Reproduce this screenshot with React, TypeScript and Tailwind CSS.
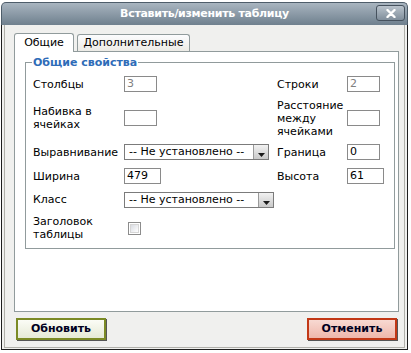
import React from 'react';

const font = { fontFamily: '"DejaVu Sans", Verdana, sans-serif' };

const TextBox = ({ value, w, muted }: { value: string; w: string; muted?: boolean }) => (
  <div className={`${w} h-[16px] border border-[#8a8a8a] bg-white pl-[2px] text-[11px] leading-[14px] ${muted ? 'text-[#808080]' : 'text-black'}`}>
    {value}
  </div>
);

const Select = ({ w }: { w: string }) => (
  <div className={`${w} h-[16px] border border-[#7b7b7b] bg-white flex items-stretch`}>
    <span className="flex-1 pl-[4px] text-[11px] leading-[14px] text-black whitespace-nowrap overflow-hidden">-- Не установлено --</span>
    <span className="w-[15px] border-l border-[#9a9a9a] bg-gradient-to-b from-[#f2f2f2] to-[#c9c9c9] flex items-end justify-center pb-[2px]">
      <svg width="7" height="4" viewBox="0 0 7 4"><path d="M0 0h7L3.5 4z" fill="#1a1a1a" /></svg>
    </span>
  </div>
);

const Label = ({ children, w }: { children: React.ReactNode; w: string }) => (
  <div className={`${w} shrink-0 text-[11px] leading-[13px] text-black`}>{children}</div>
);

export default function App() {
  return (
    <div className="w-[411px] h-[353px] bg-white overflow-hidden pt-[2px] pl-[1px]" style={font}>
      <div className="w-[407px] h-[348px] flex flex-col">
        {/* title bar */}
        <div className="h-[23px] shrink-0 rounded-t-[5px] border border-b-0 border-[#4e5d6a] bg-gradient-to-b from-[#a9b5c0] to-[#6f808e] flex items-center justify-center relative">
          <span className="text-white text-[11px] font-bold tracking-[-0.3px]">Вставить/изменить таблицу</span>
          <div className="absolute right-[2px] top-[2px] w-[29px] h-[16px] rounded-[3px] border border-[#46525e] bg-gradient-to-b from-[#b9c3cc] to-[#808e9b] flex items-center justify-center">
            <svg width="10" height="9" viewBox="0 0 10 9">
              <path d="M1.5 1L8.5 8M8.5 1L1.5 8" stroke="#fff" strokeWidth="2.4" strokeLinecap="round" />
            </svg>
          </div>
        </div>

        {/* body */}
        <div className="flex-1 flex flex-col border-l border-r border-b border-[#1e1e1e] bg-[#f0f0ee] px-[2px] pb-[1px]">
          <div className="flex-1 flex flex-col border-l border-r border-b border-[#b0b0aa] pl-[9px] pr-[5px] pt-[8px]">
            {/* tabs */}
            <div className="h-[18px] flex items-end gap-[3px]">
              <div className="relative z-10 -mb-px h-[19px] w-[60px] rounded-t-[3px] border border-b-0 border-[#919b9c] bg-white flex items-center justify-center text-[11px] text-black">
                Общие
              </div>
              <div className="h-[17px] w-[113px] rounded-t-[3px] border border-b-0 border-[#919b9c] bg-gradient-to-b from-[#fcfcfe] to-[#ecebe6] flex items-center justify-center text-[11px] text-black">
                Дополнительные
              </div>
            </div>

            {/* panel */}
            <div className="h-[261px] border border-[#919b9c] bg-white pl-[10px] pr-[3px] pt-[4px]">
              <fieldset className="border border-[#919b9c] pl-[7px] pb-[3px] pt-[3px]">
                <legend className="px-[1px] ml-[-1px] text-[11px] leading-[13px] font-bold text-[#2e6cb8]">Общие свойства</legend>

                <div className="h-[24px] flex items-center">
                  <Label w="w-[91px]">Столбцы</Label>
                  <div className="w-[153px]"><TextBox value="3" w="w-[33px]" muted /></div>
                  <Label w="w-[70px]">Строки</Label>
                  <TextBox value="2" w="w-[33px]" muted />
                </div>

                <div className="h-[44px] flex items-center">
                  <Label w="w-[91px]">Набивка в<br />ячейках</Label>
                  <div className="w-[153px]"><TextBox value="" w="w-[33px]" /></div>
                  <Label w="w-[70px]">Расстояние<br />между<br />ячейками</Label>
                  <TextBox value="" w="w-[33px]" />
                </div>

                <div className="h-[24px] flex items-center">
                  <Label w="w-[91px]">Выравнивание</Label>
                  <div className="w-[153px]"><Select w="w-[145px]" /></div>
                  <Label w="w-[70px]">Граница</Label>
                  <TextBox value="0" w="w-[33px]" />
                </div>

                <div className="h-[24px] flex items-center">
                  <Label w="w-[91px]">Ширина</Label>
                  <div className="w-[153px]"><TextBox value="479" w="w-[37px]" /></div>
                  <Label w="w-[70px]">Высота</Label>
                  <TextBox value="61" w="w-[37px]" />
                </div>

                <div className="h-[23px] flex items-center">
                  <Label w="w-[91px]">Класс</Label>
                  <Select w="w-[150px]" />
                </div>

                <div className="h-[34px] flex items-center">
                  <Label w="w-[91px]">Заголовок<br />таблицы</Label>
                  <div className="ml-[4px] w-[13px] h-[13px] border border-[#8c8c8c] bg-white p-[1px]">
                    <div className="w-full h-full border border-[#d6d6d6] bg-gradient-to-br from-[#d9dce2] to-[#ffffff]" />
                  </div>
                </div>
              </fieldset>
            </div>

            {/* buttons */}
            <div className="mt-[6px] flex justify-between pl-[2px] pr-[2px]">
              <button className="w-[90px] h-[22px] border-2 border-[#7b8a25] bg-gradient-to-b from-[#fbfcf6] to-[#e6ead6] text-[11px] font-bold text-[#000020] shadow-[1px_1px_0_#555]">
                Обновить
              </button>
              <button className="w-[90px] h-[22px] border-2 border-[#c23816] bg-gradient-to-b from-[#f8d9d2] to-[#eeb7ab] text-[11px] font-bold text-[#000020] shadow-[1px_1px_0_#555]">
                Отменить
              </button>
            </div>
          </div>
        </div>
      </div>
    </div>
  );
}
